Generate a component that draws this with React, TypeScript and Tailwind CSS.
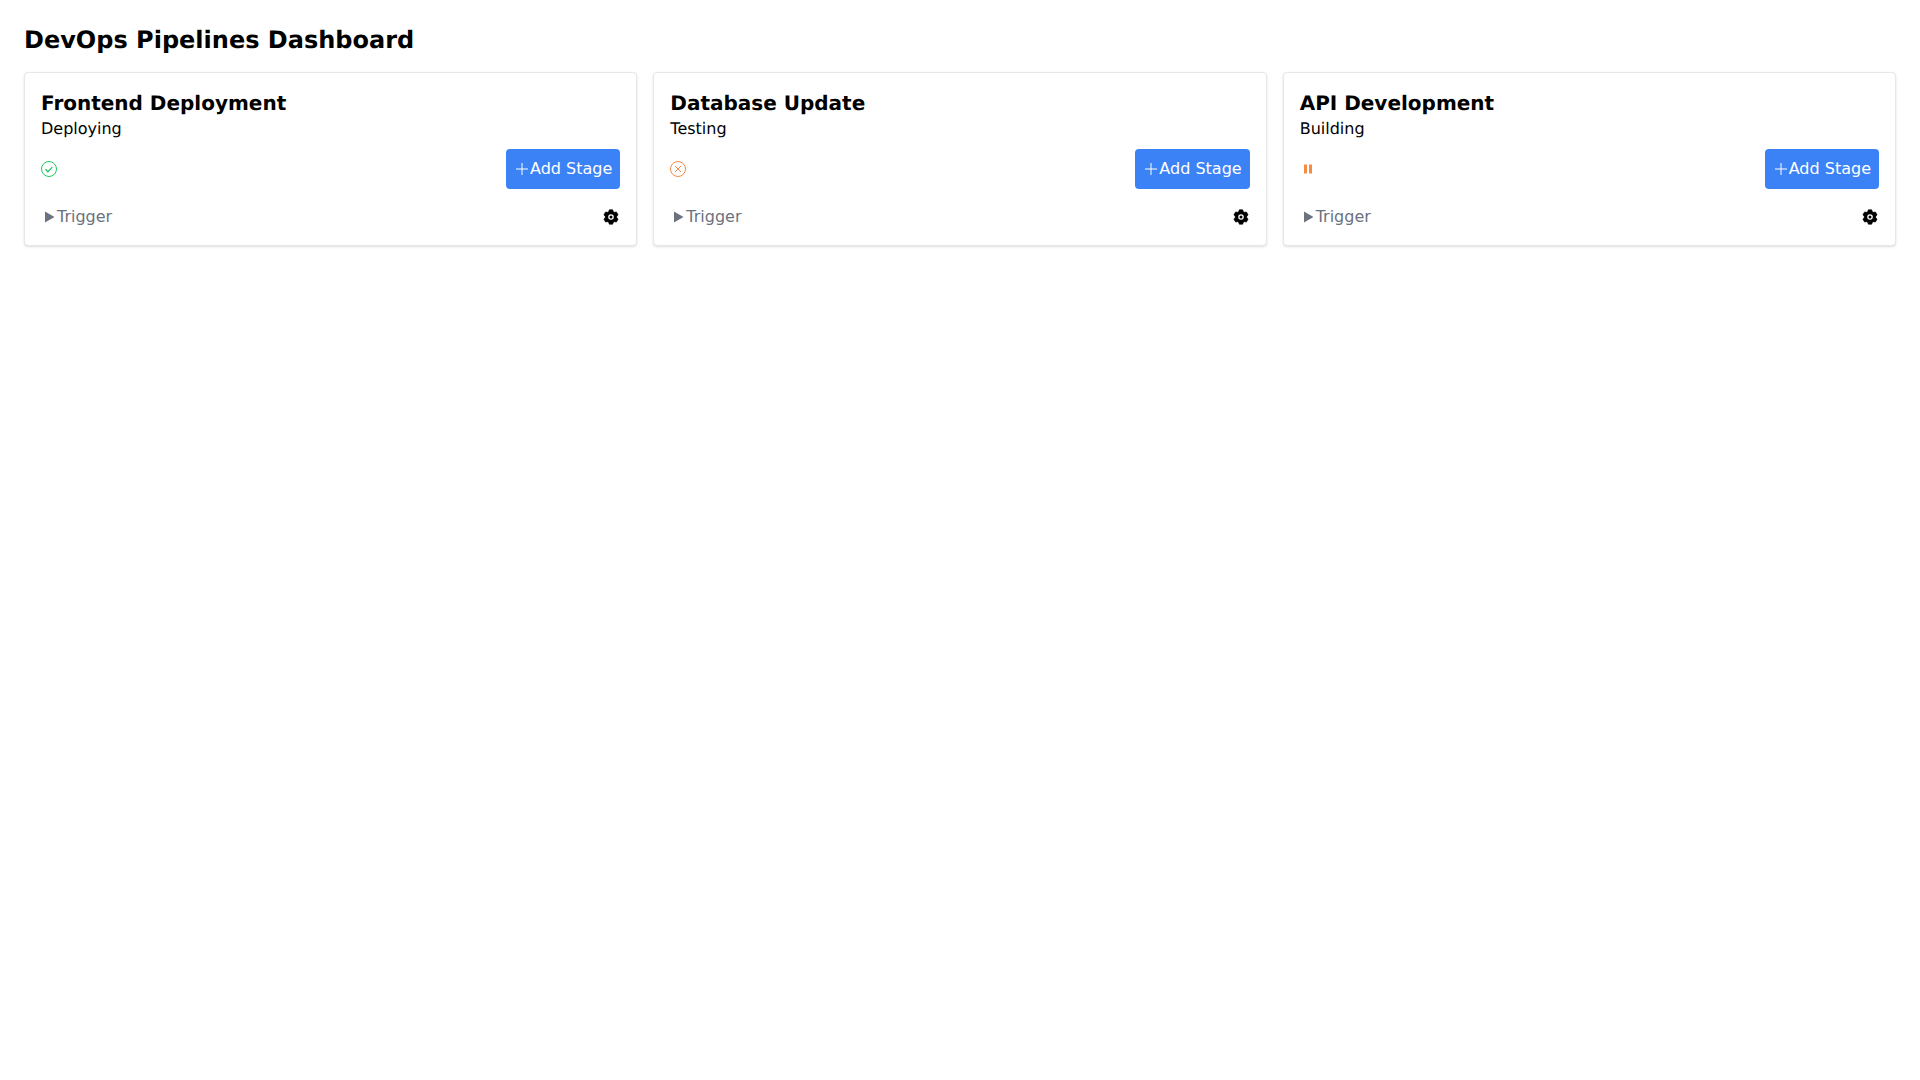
import React from 'react';

const CheckIcon = () => (
  <svg className="w-4 h-4 text-[#22c55e]" viewBox="0 0 16 16" fill="none" stroke="currentColor" strokeWidth="1">
    <circle cx="8" cy="8" r="7.5" />
    <path d="M4.5 8.3l2.4 2.400 4.400-4.600" strokeWidth="1.300" />
  </svg>
);

const CrossIcon = () => (
  <svg className="w-4 h-4 text-[#f58b45]" viewBox="0 0 16 16" fill="none" stroke="currentColor" strokeWidth="1">
    <circle cx="8" cy="8" r="7.5" />
    <path d="M5 5l6 6M11 5l-6 6" />
  </svg>
);

const PauseIcon = () => (
  <svg className="w-4 h-4 text-[#f58b45]" viewBox="0 0 16 16" fill="currentColor">
    <rect x="4" y="3.500" width="3" height="9" />
    <rect x="9" y="3.500" width="3" height="9" />
  </svg>
);

const PlayIcon = () => (
  <svg className="w-4 h-4 text-[#6b7280]" viewBox="0 0 16 16" fill="currentColor">
    <path d="M4 2.500v11l9.500-5.500z" />
  </svg>
);

const PlusIcon = () => (
  <svg className="w-4 h-4" viewBox="0 0 16 16" fill="none" stroke="currentColor" strokeWidth="1">
    <path d="M8 2v12M2 8h12" />
  </svg>
);

// six lobes, one pointing straight up
const gearPath = Array.from({ length: 6 }, (_, i) => {
  const mid = (i * 60 - 90) * (Math.PI / 180);
  const pt = (r: number, off: number) => {
    const a = mid + off * (Math.PI / 180);
    return `${(9 + r * Math.cos(a)).toFixed(2)} ${(9 + r * Math.sin(a)).toFixed(2)}`;
  };
  return `L${pt(5.8, -24)} L${pt(7.4, -13)} L${pt(7.4, 13)} L${pt(5.8, 24)}`;
}).join(' ').replace('L', 'M') + ' Z';

const GearIcon = () => (
  <svg className="w-[18px] h-[18px]" viewBox="0 0 18 18">
    <path d={gearPath} stroke="black" strokeWidth="0.6" strokeLinejoin="round" />
    <circle cx="9" cy="9" r="2.800" fill="white" />
    <circle cx="9" cy="9" r="1.500" fill="black" />
  </svg>
);

const pipelines = [
  { name: 'Frontend Deployment', status: 'Deploying', icon: <CheckIcon /> },
  { name: 'Database Update', status: 'Testing', icon: <CrossIcon /> },
  { name: 'API Development', status: 'Building', icon: <PauseIcon /> },
];

export default function App() {
  return (
    <div className="p-6 bg-white min-h-screen text-black font-['DejaVu_Sans',sans-serif] [text-rendering:geometricPrecision]">
      <h1 className="text-2xl font-bold mb-4">DevOps Pipelines Dashboard</h1>
      <div className="grid grid-cols-3 gap-4">
        {pipelines.map((p) => (
          <div key={p.name} className="bg-white rounded shadow border border-[#e5e7eb] p-4">
            <h2 className="text-xl font-bold">{p.name}</h2>
            <p className="text-base">{p.status}</p>
            <div className="flex items-center justify-between mt-2">
              {p.icon}
              <button className="flex items-center bg-[#3b82f6] text-white px-2 py-2 rounded text-base">
                <PlusIcon />
                Add Stage
              </button>
            </div>
            <div className="flex items-center justify-between mt-4">
              <button className="flex items-center text-[#6b7280] text-base">
                <PlayIcon />
                Trigger
              </button>
              <GearIcon />
            </div>
          </div>
        ))}
      </div>
    </div>
  );
}
